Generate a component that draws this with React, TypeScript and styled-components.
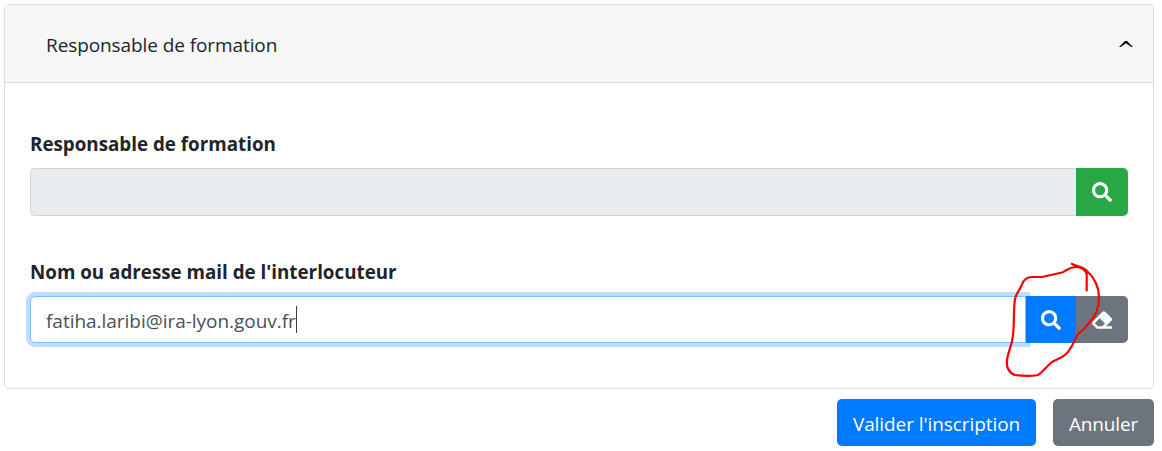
import React from "react";
import styled, { createGlobalStyle } from "styled-components";
import { FaSearch, FaEraser } from "react-icons/fa";

const GlobalStyle = createGlobalStyle`
  *, *::before, *::after { box-sizing: border-box; }
  body {
    margin: 0;
    background: #fff;
    color: #212529;
    font-family: "Segoe UI", "Open Sans", "Noto Sans", sans-serif;
    font-size: 19px;
    line-height: 30px;
  }
`;

const Page = styled.main`
  position: relative;
  width: 1162px;
  height: 451px;
  padding: 4px 8px 0 4px;
  overflow: hidden;
`;

const Card = styled.section`
  height: 385px;
  border: 1px solid #dfdfdf;
  border-radius: 5px;
  background: #fff;
`;

const CardHeader = styled.header`
  display: flex;
  align-items: center;
  justify-content: space-between;
  height: 78px;
  padding: 2px 20px 0 41px;
  border-bottom: 1px solid #d8d8d8;
  border-radius: 4px 4px 0 0;
  background: #f7f7f7;
`;

const Text = styled.span<{ $spacing: number }>`
  letter-spacing: ${(p) => p.$spacing}px;
  white-space: pre;
`;

const Chevron = styled.svg`
  margin-top: -2px;
`;

const CardBody = styled.div`
  display: flex;
  flex-direction: column;
  gap: 41px;
  padding: 46px 25px 0;
`;

const Field = styled.div`
  display: flex;
  flex-direction: column;
  gap: 9px;
`;

const Label = styled.label`
  height: 30px;
  font-weight: 700;
  font-size: 18.8px;
`;

const InputGroup = styled.div<{ $height: number }>`
  display: flex;
  height: ${(p) => p.$height}px;
`;

const Input = styled.div<{ $focused?: boolean }>`
  flex: 1;
  display: flex;
  align-items: center;
  padding: 2px 15px 0;
  border: 1px solid ${(p) => (p.$focused ? "#80bdff" : "#ced4da")};
  border-right-width: ${(p) => (p.$focused ? 1 : 0)}px;
  border-radius: 5px 0 0 5px;
  background: ${(p) => (p.$focused ? "#fff" : "#e9ecef")};
  color: #495057;
  box-shadow: ${(p) => (p.$focused ? "0 0 0 4px #bfdeff" : "none")};
`;

const Caret = styled.span`
  width: 1px;
  height: 27px;
  margin-top: -2px;
  background: #343a40;
`;

const IconButton = styled.button<{ $color: string; $width: number; $last?: boolean }>`
  position: relative;
  display: flex;
  align-items: center;
  justify-content: center;
  width: ${(p) => p.$width}px;
  padding: 0;
  border: 0;
  border-radius: ${(p) => (p.$last ? "0 5px 5px 0" : "0")};
  background: ${(p) => p.$color};
  color: #fff;
  font-size: 20px;
`;

const Actions = styled.footer`
  display: flex;
  justify-content: flex-end;
  gap: 17px;
  padding-top: 10px;
`;

const ActionButton = styled.button<{ $color: string; $width: number }>`
  width: ${(p) => p.$width}px;
  height: 47px;
  padding: 3px 0 0;
  border: 0;
  border-radius: 5px;
  background: ${(p) => p.$color};
  color: #fff;
  font: inherit;
`;

const Annotation = styled.svg`
  position: absolute;
  left: 1000px;
  top: 255px;
  pointer-events: none;
`;

export default function App() {
  return (
    <>
      <GlobalStyle />
      <Page>
        <Card>
          <CardHeader>
            <Text $spacing={-0.09}>Responsable de formation</Text>
            <Chevron width="14" height="6" viewBox="0 0 14 6">
              <path d="M0 6 L6 0 H8 L14 6 H12.4 L7 2.2 L1.6 6 Z" fill="#000" />
            </Chevron>
          </CardHeader>
          <CardBody>
            <Field>
              <Label><Text $spacing={0}>Responsable de formation</Text></Label>
              <InputGroup $height={48}>
                <Input />
                <IconButton $color="#28a745" $width={52} $last aria-label="Rechercher">
                  <FaSearch />
                </IconButton>
              </InputGroup>
            </Field>
            <Field>
              <Label><Text $spacing={0}>Nom ou adresse mail de l'interlocuteur</Text></Label>
              <InputGroup $height={47}>
                <Input $focused>
                  <Text $spacing={-0.03}>fatiha.laribi@ira-lyon.gouv.fr</Text>
                  <Caret />
                </Input>
                <IconButton $color="#007bff" $width={50} aria-label="Rechercher">
                  <FaSearch />
                </IconButton>
                <IconButton $color="#6c757d" $width={52} $last aria-label="Effacer">
                  <FaEraser />
                </IconButton>
              </InputGroup>
            </Field>
          </CardBody>
        </Card>
        <Actions>
          <ActionButton $color="#007bff" $width={199}><Text $spacing={-0.08}>Valider l'inscription</Text></ActionButton>
          <ActionButton $color="#6c757d" $width={101}><Text $spacing={-0.14}>Annuler</Text></ActionButton>
        </Actions>
        <Annotation width="110" height="130" viewBox="0 0 110 130" fill="none">
          <path
            d="M86.7 35.5 V19 C86 14 79 12 72 9 M72 9 C78 12 83 11 87 16 C94 22 99 32 99 42 C99 52 96 61 90 67 C86 71 85 74 79 78 C75 82 75 87 70 94 C67 99 63 102 58 104 L52 107 C47 111 43 117 38 120 C33 121 23 121 15 120 C9 118 6 112 7 105 C8 97 11 92 12 86 C15 74 13 56 15 44 C16 38 21 34 23 27 C26 23 28 22 33 22 H42 L62 17.5 C66 16 69 12 76 12 C81 12 83 14 87 16"
            stroke="#ff0000"
            strokeWidth="2.2"
            strokeLinecap="round"
            strokeLinejoin="round"
          />
        </Annotation>
      </Page>
    </>
  );
}
